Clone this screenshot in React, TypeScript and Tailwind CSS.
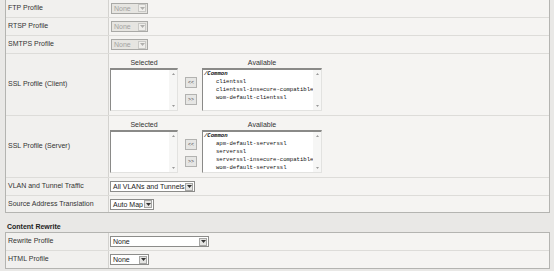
import React from 'react';

const Caret = ({ color = '#222' }: { color?: string }) => (
  <svg width="5" height="3" viewBox="0 0 5 3">
    <path d="M0 0h5L2.5 3z" fill={color} />
  </svg>
);

interface SelectProps {
  text: string;
  width: string;
  disabled?: boolean;
}

const Select = ({ text, width, disabled = false }: SelectProps) => (
  <div
    className={`flex h-[11px] items-center border ${width} ${
      disabled ? 'border-[#a9a9a6] bg-[#e6e5e1] text-[#a3a3a0]' : 'border-[#8c8c8a] bg-white text-[#222]'
    }`}
  >
    <span className="flex-1 truncate pl-[2px] leading-none">{text}</span>
    <span
      className={`mr-[1px] flex h-[8px] w-[8px] items-center justify-center border ${
        disabled ? 'border-[#c9c9c6] bg-[#efeeeb]' : 'border-[#a6a6a4] bg-[#e4e4e2]'
      }`}
    >
      <Caret color={disabled ? '#b0b0ad' : '#333'} />
    </span>
  </div>
);

const ScrollTrack = () => (
  <div className="flex h-full w-[8px] flex-col items-center justify-between bg-[#f6f6f5] py-[3px]">
    <svg width="3" height="2" viewBox="0 0 3 2">
      <path d="M0 2h3L1.5 0z" fill="#9a9a9a" />
    </svg>
    <svg width="3" height="2" viewBox="0 0 3 2">
      <path d="M0 0h3L1.5 2z" fill="#9a9a9a" />
    </svg>
  </div>
);

const ListBox = ({ width, height, items }: { width: string; height: string; items?: string[] }) => (
  <div
    className={`flex border-t-2 border-l border-r border-b border-t-[#8a8a88] border-l-[#8a8a88] border-r-[#e2e2e0] border-b-[#e2e2e0] bg-white ${width} ${height}`}
  >
    <div className="flex-1 pl-[1px] font-['Liberation_Mono',monospace] text-[5.6px] leading-[7.9px] text-[#111]">
      {items && (
        <>
          <div className="font-bold italic">/Common</div>
          {items.map((it) => (
            <div key={it} className="whitespace-nowrap pl-[12px]">
              {it}
            </div>
          ))}
        </>
      )}
    </div>
    <ScrollTrack />
  </div>
);

const ArrowButton = ({ label }: { label: string }) => (
  <div className="flex h-[11px] w-[12px] items-center justify-center border border-[#b2b2b0] bg-[#e6e6e4] text-[5px] leading-none text-[#444]">
    {label}
  </div>
);

const DualList = ({ items }: { items: string[] }) => (
  <div className="flex items-start pt-[4px]">
    <div className="flex w-[68px] flex-col">
      <div className="h-[10px] text-center leading-[10px]">Selected</div>
      <ListBox width="w-[68px]" height="h-[43px]" />
    </div>
    <div className="ml-[7px] flex flex-col gap-[6px] pt-[19px]">
      <ArrowButton label="<<" />
      <ArrowButton label=">>" />
    </div>
    <div className="ml-[5px] flex w-[120px] flex-col">
      <div className="h-[10px] text-center leading-[10px]">Available</div>
      <ListBox width="w-[120px]" height="h-[43px]" items={items} />
    </div>
  </div>
);

const Row = ({ label, h, children, last = false }: { label: string; h: string; children: React.ReactNode; last?: boolean }) => (
  <div className={`flex ${h} ${last ? '' : 'border-b border-[#dddcd9]'}`}>
    <div className="flex w-[103px] shrink-0 items-center border-r border-[#d3d2cf] bg-[#f1f0ee] pl-[2px]">
      {label}
    </div>
    <div className={`flex-1 pl-[1px] ${label.startsWith('SSL') ? '' : 'flex items-center'}`}>{children}</div>
  </div>
);

export default function App() {
  return (
    <div className="h-[271px] w-[554px] overflow-hidden bg-[#e9e8e6] pl-[5px] pr-[4px] font-['Liberation_Sans',Arial,sans-serif] text-[7px] text-[#333]">
      <div className="border-x border-b border-[#b4b4b1] bg-[#f5f4f2]">
        <Row label="FTP Profile" h="h-[18px]">
          <div className="mt-[-1px] ml-[1px]">
            <Select text="None" width="w-[37px]" disabled />
          </div>
        </Row>
        <Row label="RTSP Profile" h="h-[18px]">
          <div className="ml-[1px]">
            <Select text="None" width="w-[37px]" disabled />
          </div>
        </Row>
        <Row label="SMTPS Profile" h="h-[18px]">
          <div className="ml-[1px]">
            <Select text="None" width="w-[37px]" disabled />
          </div>
        </Row>
        <Row label="SSL Profile (Client)" h="h-[62px]">
          <DualList items={['clientssl', 'clientssl-insecure-compatible', 'wom-default-clientssl']} />
        </Row>
        <Row label="SSL Profile (Server)" h="h-[62px]">
          <DualList
            items={['apm-default-serverssl', 'serverssl', 'serverssl-insecure-compatible', 'wom-default-serverssl']}
          />
        </Row>
        <Row label="VLAN and Tunnel Traffic" h="h-[18px]">
          <Select text="All VLANs and Tunnels" width="w-[85px]" />
        </Row>
        <Row label="Source Address Translation" h="h-[16px]" last>
          <Select text="Auto Map" width="w-[44px]" />
        </Row>
      </div>
      <div className="h-[19px] pt-[10px] pl-[2px] font-bold leading-[7px] text-[#222]">Content Rewrite</div>
      <div className="border border-[#b4b4b1] bg-[#f5f4f2]">
        <Row label="Rewrite Profile" h="h-[18px]">
          <Select text="None" width="w-[99px]" />
        </Row>
        <Row label="HTML Profile" h="h-[17px]" last>
          <Select text="None" width="w-[39px]" />
        </Row>
      </div>
    </div>
  );
}
